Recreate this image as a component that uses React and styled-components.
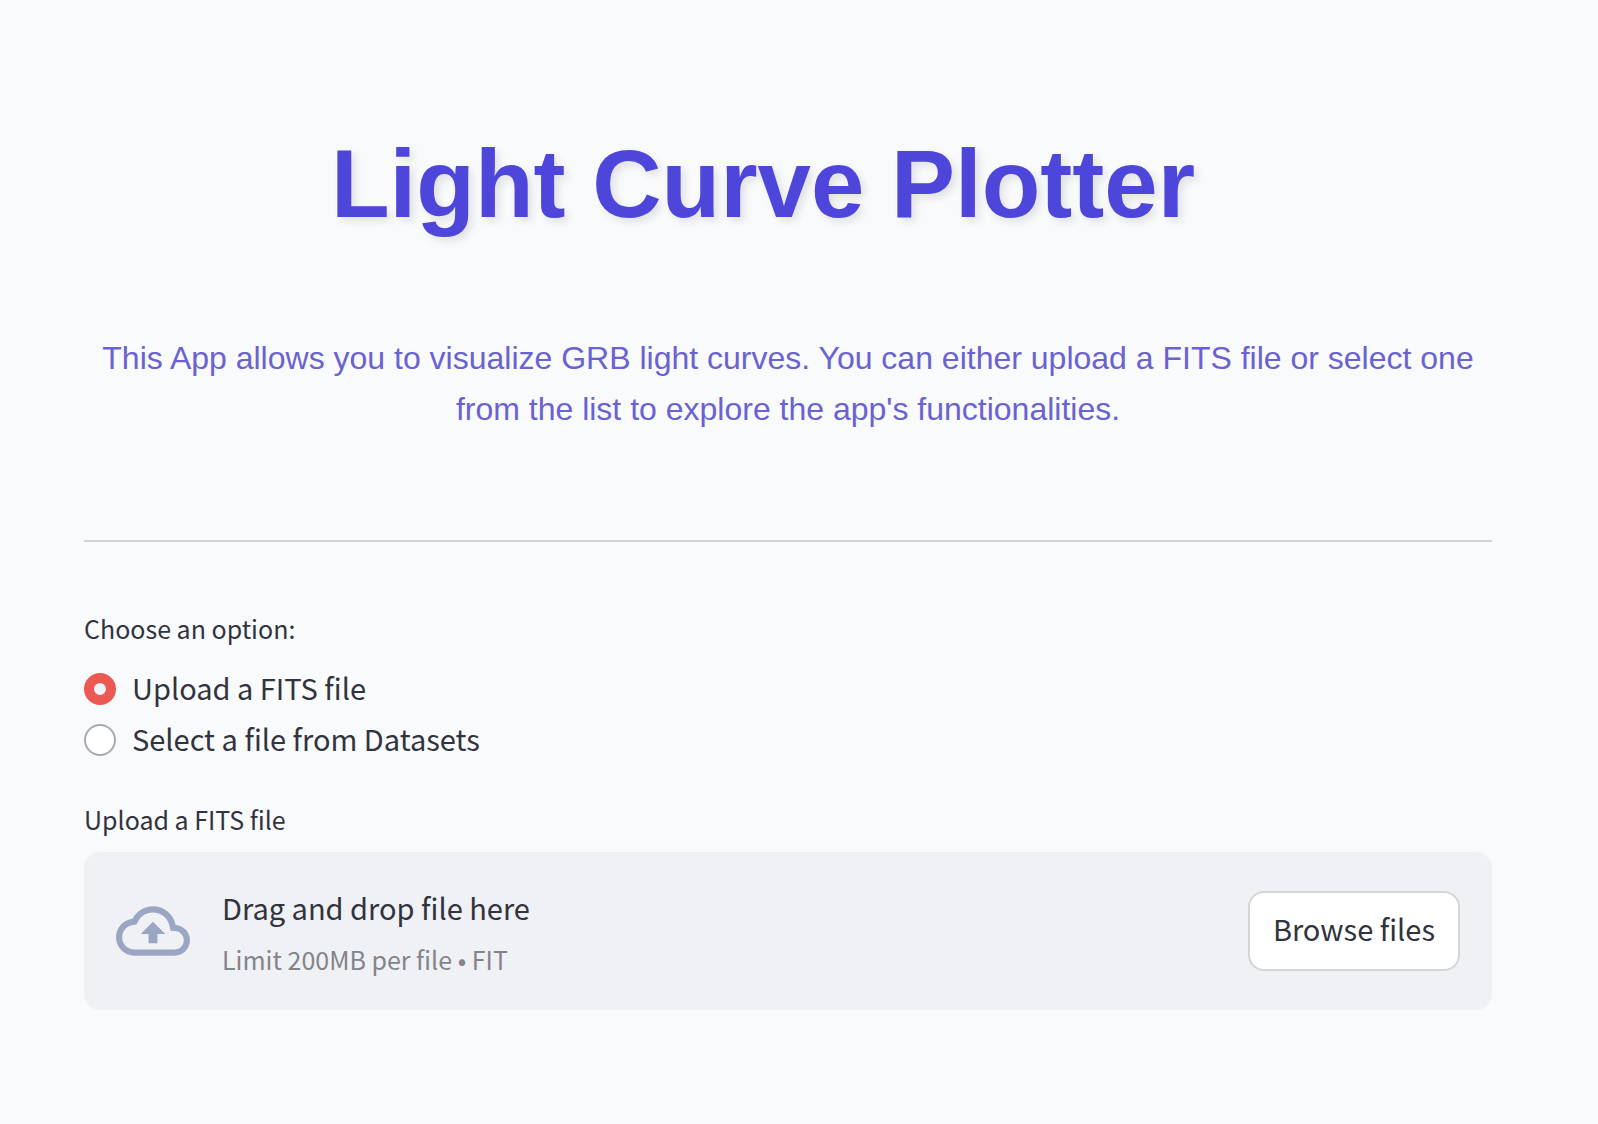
import React, { useRef, useState } from "react";
import styled, { createGlobalStyle } from "styled-components";

const sourceSans = `"Noto Sans CJK JP", "Noto Sans CJK SC", sans-serif`;
const arial = `"Liberation Sans", Arial, sans-serif`;

const GlobalStyle = createGlobalStyle`
  *, *::before, *::after { box-sizing: border-box; }
  body {
    margin: 0;
    background: #f9fafc;
    color: #31333f;
    font-family: ${sourceSans};
  }
`;

const Page = styled.main`
  padding: 126px 106px 114px 84px;
`;

const Title = styled.h1`
  margin: 0 0 91px;
  padding-right: 50px;
  color: #4e45db;
  font: 700 96px/116px ${arial};
  text-align: center;
  text-shadow: 4px 4px 8px rgba(0, 0, 0, 0.1);
`;

const Intro = styled.p`
  margin: 0;
  color: #6a62d2;
  font: 400 32px/51px ${arial};
  text-align: center;
`;

const Divider = styled.hr`
  height: 2px;
  margin: 105px 0 66px;
  border: 0;
  background: #d2d3d5;
`;

const OptionGroup = styled.fieldset`
  min-width: 0;
  margin: 0 0 34px;
  padding: 0;
  border: 0;
`;

const Legend = styled.legend`
  margin-bottom: 15px;
  padding: 0;
  font-size: 25px;
  line-height: 40px;
`;

const Option = styled.label`
  display: flex;
  align-items: center;
  gap: 16px;
  height: 51px;
  font-size: 29px;
  line-height: 48px;
  cursor: pointer;
`;

const OptionText = styled.span`
  padding-bottom: 3px;
`;

const Radio = styled.input`
  appearance: none;
  flex: none;
  width: 32px;
  height: 32px;
  margin: 0;
  border: 2px solid #a9aab0;
  border-radius: 50%;
  background: #ffffff;

  &:checked {
    border: 10px solid #ec5953;
    background: #f0f2f6;
  }
`;

const FieldLabel = styled.label`
  display: block;
  margin-bottom: 13px;
  font-size: 25px;
  line-height: 40px;
`;

const Dropzone = styled.section`
  display: flex;
  align-items: center;
  gap: 32px;
  min-height: 158px;
  padding: 24px 32px;
  border-radius: 16px;
  background: #f0f1f5;
`;

const CloudIcon = styled.svg`
  flex: none;
  width: 74px;
  height: 74px;
  fill: #9ba6c4;
`;

const Instructions = styled.div`
  display: flex;
  flex: 1;
  flex-direction: column;
  gap: 4px;
`;

const Prompt = styled.span`
  font-size: 29px;
  line-height: 51px;
`;

const Limit = styled.span`
  color: #83848a;
  font-size: 25px;
  line-height: 44px;
`;

const BrowseButton = styled.button`
  flex: none;
  height: 80px;
  padding: 0 23px 7px;
  border: 2px solid #d5d6d8;
  border-radius: 16px;
  background: #ffffff;
  color: inherit;
  font: 400 29px/48px ${sourceSans};
  cursor: pointer;
`;

const options = [
  { value: "upload", label: "Upload a FITS file" },
  { value: "dataset", label: "Select a file from Datasets" },
];

export default function App() {
  const [source, setSource] = useState("upload");
  const fileInput = useRef(null);

  return (
    <>
      <GlobalStyle />
      <Page>
        <Title>Light Curve Plotter</Title>
        <Intro>
          This App allows you to visualize GRB light curves. You can either
          upload a FITS file or select one from the list to explore the app's
          functionalities.
        </Intro>
        <Divider />
        <OptionGroup>
          <Legend>Choose an option:</Legend>
          {options.map(({ value, label }) => (
            <Option key={value}>
              <Radio
                type="radio"
                name="source"
                value={value}
                checked={source === value}
                onChange={() => setSource(value)}
              />
              <OptionText>{label}</OptionText>
            </Option>
          ))}
        </OptionGroup>
        <FieldLabel htmlFor="fits-file">Upload a FITS file</FieldLabel>
        <Dropzone>
          <CloudIcon viewBox="0 0 24 24" aria-hidden="true">
            <path d="M19.35 10.04A7.49 7.49 0 0 0 12 4C9.11 4 6.6 5.64 5.35 8.04A5.994 5.994 0 0 0 0 14c0 3.31 2.69 6 6 6h13c2.76 0 5-2.24 5-5 0-2.64-2.05-4.78-4.65-4.96zM19 18H6c-2.21 0-4-1.79-4-4 0-2.05 1.53-3.76 3.56-3.97l1.07-.11.5-.95A5.469 5.469 0 0 1 12 6c2.62 0 4.88 1.86 5.39 4.43l.3 1.5 1.53.11A2.98 2.98 0 0 1 22 15c0 1.65-1.35 3-3 3zM8 13h2.55v3h2.9v-3H16l-4-4z" />
          </CloudIcon>
          <Instructions>
            <Prompt>Drag and drop file here</Prompt>
            <Limit>Limit 200MB per file • FIT</Limit>
          </Instructions>
          <input ref={fileInput} id="fits-file" type="file" accept=".fit" hidden />
          <BrowseButton type="button" onClick={() => fileInput.current.click()}>
            Browse files
          </BrowseButton>
        </Dropzone>
      </Page>
    </>
  );
}
